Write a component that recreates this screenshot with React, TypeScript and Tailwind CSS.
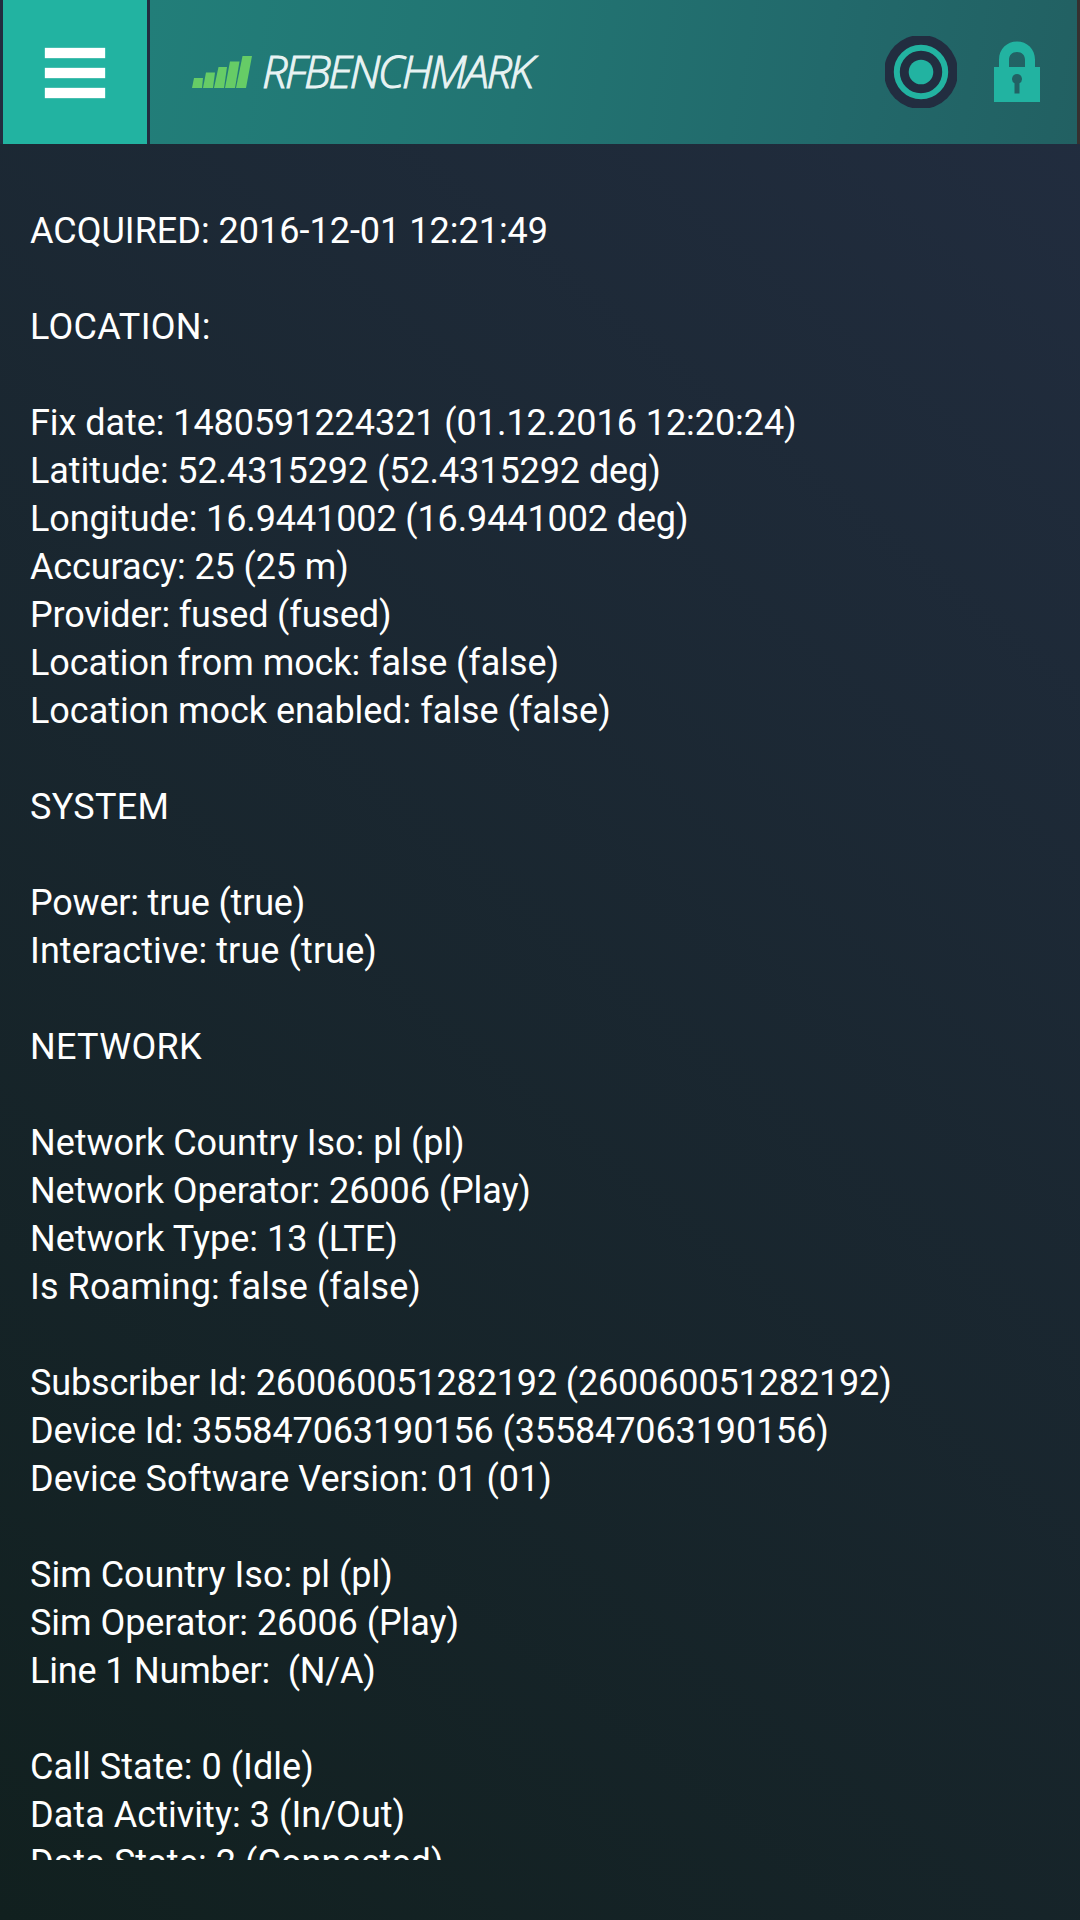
interface Line {
  text: string;
  tracking?: string;
}

const lines: Line[] = [
  { text: "ACQUIRED: 2016-12-01 12:21:49" },
  { text: "" },
  { text: "LOCATION:", tracking: "0.3px" },
  { text: "" },
  { text: "Fix date: 1480591224321 (01.12.2016 12:20:24)", tracking: "-0.06px" },
  { text: "Latitude: 52.4315292 (52.4315292 deg)", tracking: "-0.08px" },
  { text: "Longitude: 16.9441002 (16.9441002 deg)", tracking: "-0.12px" },
  { text: "Accuracy: 25 (25 m)", tracking: "-0.12px" },
  { text: "Provider: fused (fused)", tracking: "-0.15px" },
  { text: "Location from mock: false (false)", tracking: "-0.07px" },
  { text: "Location mock enabled: false (false)", tracking: "-0.03px" },
  { text: "" },
  { text: "SYSTEM", tracking: "0.3px" },
  { text: "" },
  { text: "Power: true (true)", tracking: "-0.2px" },
  { text: "Interactive: true (true)", tracking: "0.1px" },
  { text: "" },
  { text: "NETWORK", tracking: "0.3px" },
  { text: "" },
  { text: "Network Country Iso: pl (pl)", tracking: "-0.04px" },
  { text: "Network Operator: 26006 (Play)", tracking: "-0.08px" },
  { text: "Network Type: 13 (LTE)" },
  { text: "Is Roaming: false (false)", tracking: "0.1px" },
  { text: "" },
  { text: "Subscriber Id: 260060051282192 (260060051282192)", tracking: "-0.15px" },
  { text: "Device Id: 355847063190156 (355847063190156)", tracking: "-0.12px" },
  { text: "Device Software Version: 01 (01)" },
  { text: "" },
  { text: "Sim Country Iso: pl (pl)" },
  { text: "Sim Operator: 26006 (Play)", tracking: "-0.05px" },
  { text: "Line 1 Number:  (N/A)", tracking: "-0.17px" },
  { text: "" },
  { text: "Call State: 0 (Idle)", tracking: "0.06px" },
  { text: "Data Activity: 3 (In/Out)", tracking: "0.05px" },
  { text: "Data State: 2 (Connected)", tracking: "0.08px" },
];

function MenuButton() {
  return (
    <button aria-label="Menu" className="flex h-36 w-36 shrink-0 flex-col items-center justify-center gap-[10px] bg-[#22b3a1] pt-[2px]">
      <span className="h-[10px] w-[60px] bg-white shadow-[0_0_1px_#ffffff]" />
      <span className="h-[10px] w-[60px] bg-white shadow-[0_0_1px_#ffffff]" />
      <span className="h-[10px] w-[60px] bg-white shadow-[0_0_1px_#ffffff]" />
    </button>
  );
}

function SignalBars() {
  return (
    <svg width="60" height="32" viewBox="0 0 60 32" fill="#66cc66" className="shrink-0">
      <path d="M0 32L2 22H11L10 32Z" />
      <path d="M11 32L14 16.5H23L21 32Z" />
      <path d="M22 32L26.5 11H35L32 32Z" />
      <path d="M33 32L38 5.5H47.5L43 32Z" />
      <path d="M44 32L50.5 0H60L54 32Z" />
    </svg>
  );
}

function TargetIcon() {
  return (
    <svg width="72" height="72" viewBox="0 0 72 72" className="shrink-0">
      <circle cx="36" cy="36" r="37" fill="#222d40" />
      <circle cx="36" cy="36" r="24.2" fill="none" stroke="#22b3a1" strokeWidth="6" />
      <circle cx="36" cy="36" r="12.3" fill="#22b3a1" />
    </svg>
  );
}

function LockIcon() {
  return (
    <svg width="46" height="62" viewBox="0 0 46 62" className="shrink-0">
      <path
        fill="#22b3a1"
        fillRule="evenodd"
        d="M0 26H5V18.5C5 8 13 0.5 23 0.5S41 8 41 18.5V26H46V61H0ZM15 26H31V19C31 14 28 11 23 11S15 14 15 19Z"
      />
      <path fill="#226264" d="M23 33a5 5 0 0 1 2.5 9.3V52.5h-5V42.3A5 5 0 0 1 23 33Z" />
    </svg>
  );
}

export default function App() {
  return (
    <div className="flex h-[1920px] w-[1080px] flex-col overflow-hidden bg-[linear-gradient(39deg,#11201f_0%,#222d40_100%)]">
      <header className="flex h-36 shrink-0 gap-[3px] border-r-[3px] border-[#36302f] bg-[#222d40] pl-[3px]">
        <MenuButton />
        <div className="flex flex-1 items-center bg-[linear-gradient(100deg,#227e79_0%,#227472_40%,#22696b_72%,#226062_100%)] pl-[42px] pr-[37px]">
          <SignalBars />
          <span className="ml-[10px] whitespace-nowrap pb-[4px] font-['Open_Sans'] text-[45px] font-light italic leading-none tracking-[-2.6px] text-[#e8f3f3] [-webkit-text-stroke:1px_#e8f3f3]">
            RFBENCHMARK
          </span>
          <div className="ml-auto flex items-center gap-[37px]">
            <TargetIcon />
            <LockIcon />
          </div>
        </div>
      </header>
      <main className="mt-[63px] h-[1653px] overflow-hidden pl-[30px] font-['Roboto',sans-serif] text-[36px] leading-[48px] text-white">
        {lines.map((line, i) => (
          <p key={i} className="h-12 whitespace-pre" style={{ letterSpacing: line.tracking }}>
            {line.text}
          </p>
        ))}
      </main>
    </div>
  );
}
